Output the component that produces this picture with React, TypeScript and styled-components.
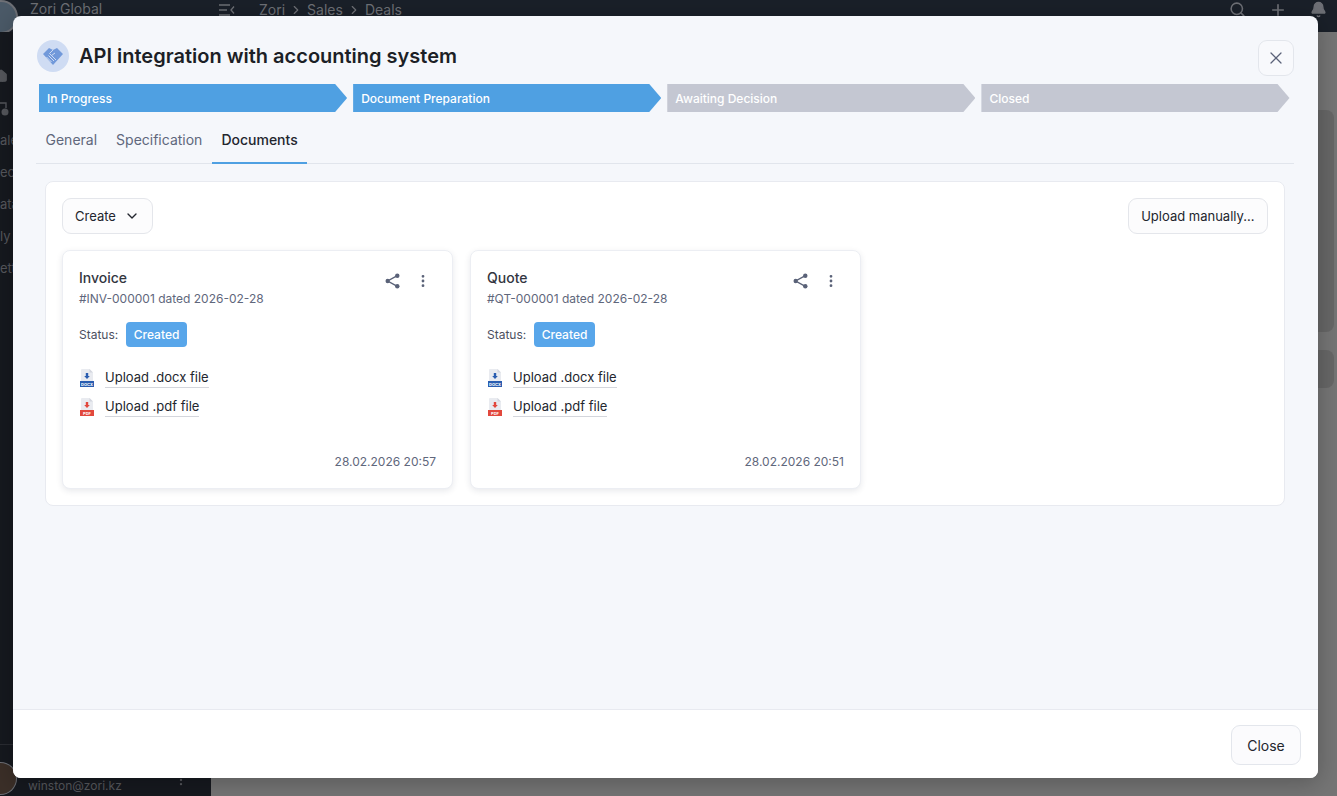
import styled, { createGlobalStyle } from "styled-components";
import { ChevronDown, ChevronRight, MoreVertical, Plus, Search, Bell, Home, X } from "lucide-react";

const GlobalStyle = createGlobalStyle`
  html, body {
    margin: 0;
    padding: 0;
    height: 100%;
    overflow: hidden;
    font-family: Inter, "Liberation Sans", sans-serif;
  }
  * {
    box-sizing: border-box;
  }
`;

const stages = [
  { title: "In Progress", active: true },
  { title: "Document Preparation", active: true },
  { title: "Awaiting Decision", active: false },
  { title: "Closed", active: false },
];

const documents = [
  { title: "Invoice", number: "#INV-000001 dated 2026-02-28", time: "28.02.2026 20:57" },
  { title: "Quote", number: "#QT-000001 dated 2026-02-28", time: "28.02.2026 20:51" },
];

const FileIcon = ({ color, label }: { color: string; label: string }) => (
  <svg width="16" height="20" viewBox="0 0 16 20">
    <path d="M3 1h7.500L14 4.500V18a1 1 0 0 1-1 1H3a1 1 0 0 1-1-1V2a1 1 0 0 1 1-1z" fill="#e9ebf0" />
    <path d="M10.500 1L14 4.500h-3.500z" fill="#d3d6de" />
    <path d="M6.800 5h2.400v3h1.600L8 11 5.200 8h1.600z" fill={color} />
    <rect x="1" y="13" width="14" height="6" fill={color} />
    <text x="8" y="17.800" fontSize="4" fontWeight="700" fill="#fff" textAnchor="middle">
      {label}
    </text>
  </svg>
);

const HandshakeIcon = () => (
  <svg width="22" height="20" viewBox="0 0 22 20">
    <path d="M1 8L7 2l4 2 4-2 6 6-10 11z" fill="#7199da" />
    <path
      d="M11 4L7.500 7.500l2 2L13 7M4.500 11l5 5M6.500 9.500l5.500 5.500M9 9l5 5"
      fill="none"
      stroke="#cfdcf3"
      strokeWidth="1"
    />
  </svg>
);

const ShareIcon = () => (
  <svg width="15" height="16" viewBox="0 0 15 16" fill="#5a6278">
    <circle cx="2.700" cy="8" r="2.200" />
    <circle cx="12.300" cy="2.700" r="2.200" />
    <circle cx="12.300" cy="13.300" r="2.200" />
    <path d="M12.300 2.700L2.700 8l9.600 5.300" fill="none" stroke="#5a6278" strokeWidth="1.400" />
  </svg>
);

export default function App() {
  return (
    <>
      <GlobalStyle />
      <Page>
        <TopBar>
          <Brand>
            <BrandLogo />
            <BrandName>Zori Global</BrandName>
          </Brand>
          <Crumbs>
            <MenuGlyph viewBox="0 0 16 12">
              <path d="M0 1h11M0 6h8M0 11h11M15 2.500L12 6l3 3.500" fill="none" stroke="#6e7076" strokeWidth="1.300" />
            </MenuGlyph>
            <Crumb>Zori</Crumb>
            <ChevronRight size={14} />
            <Crumb>Sales</Crumb>
            <ChevronRight size={14} />
            <Crumb>Deals</Crumb>
          </Crumbs>
          <TopIcons>
            <Search size={17} strokeWidth={2.200} />
            <Plus size={18} strokeWidth={2.200} />
            <Bell size={17} fill="#6e7076" />
          </TopIcons>
        </TopBar>
        <Body>
          <Sidebar>
            <SideNav>
              <HomeIcon size={14} fill="#55575c" />
              <SideGlyph viewBox="0 0 14 17">
                <path d="M0 4h6v5" fill="none" stroke="#55575c" strokeWidth="1.400" />
                <circle cx="5" cy="13" r="3.500" fill="#55575c" />
              </SideGlyph>
              <SideItem>ale</SideItem>
              <SideItem>eo</SideItem>
              <SideItem>ata</SideItem>
              <SideItem>ly</SideItem>
              <SideItem>ett</SideItem>
            </SideNav>
            <SideFooter>
              <Avatar />
              <Email>winston@zori.kz</Email>
              <FooterDots size={14} />
            </SideFooter>
          </Sidebar>
          <Backdrop>
            <BackdropCard />
            <BackdropRow />
          </Backdrop>
        </Body>
        <Modal>
          <ModalBody>
            <Header>
              <TitleGroup>
                <TitleBadge>
                  <HandshakeIcon />
                </TitleBadge>
                <Title>API integration with accounting system</Title>
              </TitleGroup>
              <CloseIconButton>
                <X size={20} strokeWidth={1.500} />
              </CloseIconButton>
            </Header>
            <Stages>
              {stages.map((stage) => (
                <Stage key={stage.title} $active={stage.active}>
                  {stage.title}
                </Stage>
              ))}
            </Stages>
            <Tabs>
              <Tab>General</Tab>
              <Tab>Specification</Tab>
              <Tab $active>Documents</Tab>
            </Tabs>
            <Panel>
              <PanelActions>
                <ActionButton>
                  Create
                  <ChevronDown size={16} />
                </ActionButton>
                <UploadButton>Upload manually...</UploadButton>
              </PanelActions>
              <Cards>
                {documents.map((doc) => (
                  <Card key={doc.title}>
                    <CardHead>
                      <div>
                        <CardTitle>{doc.title}</CardTitle>
                        <CardNumber>{doc.number}</CardNumber>
                      </div>
                      <CardTools>
                        <ShareIcon />
                        <MoreVertical size={16} color="#5a6278" strokeWidth={2.200} />
                      </CardTools>
                    </CardHead>
                    <StatusRow>
                      Status:
                      <StatusBadge>Created</StatusBadge>
                    </StatusRow>
                    <Files>
                      <FileRow>
                        <FileIcon color="#2a5db0" label="DOCX" />
                        <FileLink>Upload .docx file</FileLink>
                      </FileRow>
                      <FileRow>
                        <FileIcon color="#e2483d" label="PDF" />
                        <FileLink>Upload .pdf file</FileLink>
                      </FileRow>
                    </Files>
                    <CardTime>{doc.time}</CardTime>
                  </Card>
                ))}
              </Cards>
            </Panel>
          </ModalBody>
          <Footer>
            <FooterButton>Close</FooterButton>
          </Footer>
        </Modal>
      </Page>
    </>
  );
}

const Page = styled.div`
  position: relative;
  width: 1337px;
  height: 796px;
  display: flex;
  flex-flow: column;
  background: #757575;
  overflow: hidden;
`;

const TopBar = styled.div`
  height: 32px;
  flex: none;
  display: flex;
  background: #1a2029;
  color: #6e7076;
`;

const Brand = styled.div`
  width: 211px;
  display: flex;
  gap: 12px;
`;

const BrandLogo = styled.div`
  width: 18px;
  height: 34px;
  border-radius: 0 17px 17px 0;
  background: #4b5a68;
  border: 2px solid #6e7076;
  border-left: 0;
  flex: none;
`;

const BrandName = styled.span`
  font-size: 14px;
  line-height: 18px;
`;

const Crumbs = styled.div`
  flex: 1;
  display: flex;
  align-items: center;
  align-self: flex-start;
  gap: 4px;
  padding: 2px 0 0 8px;
  font-size: 14px;
  line-height: 16px;
`;

const MenuGlyph = styled.svg`
  width: 16px;
  height: 12px;
  margin-right: 20px;
`;

const Crumb = styled.span``;

const TopIcons = styled.div`
  display: flex;
  gap: 23px;
  padding: 1px 10px 0 0;
  align-items: flex-start;
`;

const Body = styled.div`
  flex: 1;
  display: flex;
`;

const Sidebar = styled.div`
  width: 211px;
  display: flex;
  flex-flow: column;
  justify-content: space-between;
  background: #16191f;
  color: #56585d;
  font-size: 13px;
`;

const SideNav = styled.div`
  display: flex;
  flex-flow: column;
  gap: 16px;
  padding-top: 37px;
`;

const HomeIcon = styled(Home)`
  margin-left: -6px;
`;

const SideGlyph = styled.svg`
  width: 14px;
  height: 17px;
`;

const SideItem = styled.span`
  line-height: 16px;
`;

const SideFooter = styled.div`
  display: flex;
  align-items: flex-end;
  gap: 11px;
  height: 52px;
  border-top: 1px solid #2a2c32;
  padding-bottom: 1px;
`;

const Avatar = styled.div`
  width: 17px;
  height: 33px;
  background: #3b2f28;
  border: 1px solid #6e7076;
  border-left: 0;
  border-radius: 0 17px 17px 0;
`;

const Email = styled.span`
  font-size: 12px;
  line-height: 18px;
`;

const FooterDots = styled(MoreVertical)`
  margin: 0 0 8px 41px;
`;

const Backdrop = styled.div`
  flex: 1;
  display: flex;
  flex-flow: column;
  align-items: flex-end;
  gap: 18px;
  padding: 78px 3px 0 0;
`;

const BackdropCard = styled.div`
  width: 40px;
  height: 222px;
  background: #676767;
  border-radius: 8px;
`;

const BackdropRow = styled.div`
  width: 40px;
  height: 38px;
  background: #676767;
  border-radius: 8px;
`;

const Modal = styled.div`
  position: absolute;
  left: 13px;
  top: 16px;
  width: 1305px;
  height: 762px;
  display: flex;
  flex-flow: column;
  border-radius: 8px;
  overflow: hidden;
  background: #f5f7fb;
  box-shadow: 0 4px 24px rgba(0, 0, 0, 0.25);
`;

const ModalBody = styled.div`
  flex: 1;
  padding: 24px 24px 0 24px;
`;

const Header = styled.div`
  display: flex;
  justify-content: space-between;
  align-items: flex-start;
  height: 44px;
`;

const TitleGroup = styled.div`
  display: flex;
  align-items: center;
  gap: 10px;
  height: 32px;
`;

const TitleBadge = styled.div`
  width: 32px;
  height: 32px;
  border-radius: 50%;
  display: flex;
  align-items: center;
  justify-content: center;
  background: #cfdcf3;
`;

const Title = styled.h1`
  margin: 0;
  font-size: 20px;
  line-height: 30px;
  font-weight: 600;
  color: #1c1f26;
`;

const CloseIconButton = styled.button`
  width: 36px;
  height: 36px;
  display: flex;
  align-items: center;
  justify-content: center;
  padding: 0;
  border: 1px solid #e3e6ec;
  border-radius: 9px;
  background: #f8f9fc;
  color: #5a6278;
`;

const Stages = styled.div`
  display: flex;
  gap: 6px;
  padding-left: 2px;
  width: 1252.500px;
`;

const Stage = styled.div<{ $active: boolean }>`
  flex: 1;
  height: 28px;
  padding-left: 8px;
  display: flex;
  align-items: center;
  font-size: 12px;
  font-weight: 500;
  color: #fff;
  background: ${(p) => (p.$active ? "#4fa0e2" : "#c4c7d2")};
  clip-path: polygon(0 0, calc(100% - 12px) 0, 100% 50%, calc(100% - 12px) 100%, 0 100%);
`;

const Tabs = styled.div`
  display: flex;
  margin: 8px 0 0 -1px;
  height: 44px;
  border-bottom: 1px solid #e1e5ec;
`;

const Tab = styled.div<{ $active?: boolean }>`
  padding: 0 9.500px;
  line-height: 40px;
  height: 44px;
  font-size: 14px;
  font-weight: ${(p) => (p.$active ? 500 : 400)};
  color: ${(p) => (p.$active ? "#23262e" : "#5f677c")};
  border-bottom: 2px solid ${(p) => (p.$active ? "#4fa0e2" : "transparent")};
`;

const Panel = styled.div`
  margin: 17px 9px 0 8px;
  height: 325px;
  padding: 16px;
  background: #fff;
  border: 1px solid #e8eaf0;
  border-radius: 8px;
`;

const PanelActions = styled.div`
  display: flex;
  justify-content: space-between;
`;

const ActionButton = styled.button`
  height: 36px;
  padding: 0 12px;
  display: flex;
  align-items: center;
  gap: 8px;
  border: 1px solid #e4e6eb;
  border-radius: 9px;
  background: #fcfcfd;
  color: #23262e;
  font-family: inherit;
  font-size: 13px;
`;

const UploadButton = styled(ActionButton)`
  padding: 0 12.500px;
`;

const Cards = styled.div`
  display: flex;
  gap: 17px;
  margin-top: 16px;
`;

const Card = styled.div`
  width: 391px;
  height: 239px;
  display: flex;
  flex-flow: column;
  padding: 19px 16px 18px;
  background: #fff;
  border: 1px solid #eceef3;
  border-radius: 8px;
  box-shadow: 0 2px 6px rgba(30, 40, 70, 0.1);
`;

const CardHead = styled.div`
  display: flex;
  justify-content: space-between;
`;

const CardTitle = styled.div`
  font-size: 14px;
  line-height: 16px;
  font-weight: 500;
  color: #33363f;
`;

const CardNumber = styled.div`
  margin-top: 5px;
  font-size: 12px;
  line-height: 16px;
  color: #5f677c;
`;

const CardTools = styled.div`
  display: flex;
  gap: 14.500px;
  padding: 3px 5.500px 0 0;
`;

const StatusRow = styled.div`
  display: flex;
  align-items: center;
  gap: 8px;
  margin-top: 15px;
  font-size: 12px;
  color: #4b5060;
`;

const StatusBadge = styled.span`
  padding: 0 7.500px;
  height: 25px;
  display: flex;
  align-items: center;
  border-radius: 4px;
  background: #58a6ea;
  color: #fff;
  font-size: 12px;
  font-weight: 500;
`;

const Files = styled.div`
  display: flex;
  flex-flow: column;
  gap: 6px;
  margin-top: 19px;
  flex: 1;
`;

const FileRow = styled.div`
  display: flex;
  align-items: center;
  gap: 10px;
  height: 23px;
`;

const FileLink = styled.span`
  font-size: 13px;
  line-height: 20px;
  color: #23262e;
  border-bottom: 1px solid #d4d6dc;
`;

const CardTime = styled.div`
  align-self: flex-end;
  font-size: 12px;
  line-height: 16px;
  color: #5f677c;
`;

const Footer = styled.div`
  height: 69px;
  flex: none;
  display: flex;
  justify-content: flex-end;
  padding: 15px 17px 0 0;
  background: #fff;
  border-top: 1px solid #e8eaf0;
`;

const FooterButton = styled.button`
  width: 70px;
  height: 40px;
  padding: 0;
  border: 1px solid #e3e6ec;
  border-radius: 9px;
  background: #fbfbfd;
  color: #23262e;
  font-family: inherit;
  font-size: 14px;
`;
